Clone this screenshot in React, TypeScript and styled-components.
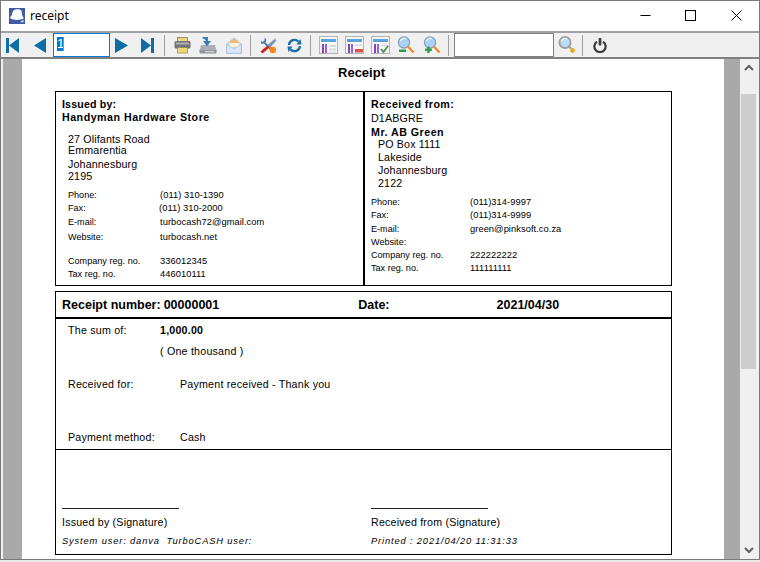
import React from 'react';
import styled, { createGlobalStyle } from 'styled-components';

const GlobalStyle = createGlobalStyle`
  html, body {
    margin: 0;
    padding: 0;
    background: #e8e8e8;
  }
  * {
    box-sizing: border-box;
  }
`;

const issuedContact = [
  { label: 'Phone:', value: '(011) 310-1390', mt: 8 },
  { label: 'Fax:', value: '(011) 310-2000', mt: 2, shift: -1 },
  { label: 'E-mail:', value: 'turbocash72@gmail.com', mt: 3 },
  { label: 'Website:', value: 'turbocash.net', mt: 4 },
  { label: 'Company reg. no.', value: '336012345', mt: 13 },
  { label: 'Tax reg. no.', value: '446010111', mt: 2 },
];

const receivedContact = [
  { label: 'Phone:', value: '(011)314-9997', mt: 8 },
  { label: 'Fax:', value: '(011)314-9999', mt: 2 },
  { label: 'E-mail:', value: 'green@pinksoft.co.za', mt: 3 },
  { label: 'Website:', value: '', mt: 2 },
  { label: 'Company reg. no.', value: '222222222', mt: 2 },
  { label: 'Tax reg. no.', value: '111111111', mt: 2 },
];

const Blue = '#0e6ca6';

const FirstIcon = () => (
  <svg width="14" height="15" viewBox="0 0 14 15">
    <rect x="0" y="0" width="3" height="15" fill={Blue} />
    <polygon points="13,0 13,15 3,7.5" fill={Blue} />
  </svg>
);
const PrevIcon = () => (
  <svg width="12" height="15" viewBox="0 0 12 15">
    <polygon points="12,0 12,15 0,7.5" fill={Blue} />
  </svg>
);
const NextIcon = () => (
  <svg width="13" height="15" viewBox="0 0 13 15">
    <polygon points="0,0 0,15 13,7.5" fill={Blue} />
  </svg>
);
const LastIcon = () => (
  <svg width="14" height="15" viewBox="0 0 14 15">
    <polygon points="0,0 0,15 10,7.5" fill={Blue} />
    <rect x="10" y="0" width="3" height="15" fill={Blue} />
  </svg>
);

const PrintIcon = () => (
  <svg width="17" height="17" viewBox="0 0 17 17">
    <rect x="3.5" y="0.5" width="10" height="4" fill="#e8d88a" stroke="#7d7440" strokeWidth="0.7" />
    <rect x="0.5" y="4" width="16" height="7.5" rx="1.5" fill="#6f7479" />
    <rect x="2" y="5.5" width="13" height="2" fill="#aeb3b7" />
    <circle cx="15" cy="5" r="0.8" fill="#d8352a" />
    <rect x="3.5" y="10.5" width="10" height="5.5" fill="#ecd978" stroke="#8d8340" strokeWidth="0.7" />
  </svg>
);
const ExportIcon = () => (
  <svg width="18" height="18" viewBox="0 0 18 18">
    <polygon points="2,9 16,9 17.5,15 0.5,15" fill="#a9afb5" />
    <rect x="0.5" y="14" width="17" height="3.5" fill="#8f959a" />
    <rect x="6" y="15.2" width="9" height="1" fill="#e4e6e8" />
    <path d="M3.5 1 H9 V5 H12 L8 10.5 L4 5 H7 C6.5 3.5 5 2.5 3.5 2.5 Z" fill="#3d7db4" />
  </svg>
);
const MailIcon = () => (
  <svg width="16" height="17" viewBox="0 0 16 17">
    <path d="M0.5 7 L8 1 L15.5 7 V16.5 H0.5 Z" fill="#c4dbf3" stroke="#9dbbdc" strokeWidth="0.7" />
    <rect x="3.5" y="4" width="9" height="6" fill="#fbf3d6" />
    <path d="M3.5 4.5 L8 1.8 L12.5 4.5 V6 H3.5 Z" fill="#edb77c" />
    <path d="M0.8 7.5 L8 12 L15.2 7.5 V16.2 H0.8 Z" fill="#d9e8f8" stroke="#9dbbdc" strokeWidth="0.6" />
  </svg>
);
const ToolsIcon = () => (
  <svg width="17" height="17" viewBox="0 0 17 17">
    <path d="M4.5 0.5 L6.5 3 L5.5 5.5 L14.5 13.5 L12.5 15.5 L4 6.5 L1.5 7 L0.5 3.5 L2.5 5 L4.5 3.5 Z" fill="#5278a6" />
    <path d="M16.5 0.5 L7 8.5 L9.5 11 L16.5 3.5 L15 3 Z" fill="#7095bb" />
    <path d="M7.5 8.5 L0.5 14.5 L2.5 16.5 L9.5 10.5 Z" fill="#d4201c" />
    <circle cx="12.8" cy="13" r="3.2" fill="#ef8a1e" />
  </svg>
);
const RefreshIcon = () => (
  <svg width="15" height="15" viewBox="0 0 15 15" fill="none">
    <path d="M2 7 A5.5 5.5 0 0 1 11.5 3.6" stroke="#1a6fa6" strokeWidth="2.3" />
    <polygon points="9.5,6.5 14.5,6.5 13.5,1" fill="#1a6fa6" />
    <path d="M13 8 A5.5 5.5 0 0 1 3.5 11.4" stroke="#1a6fa6" strokeWidth="2.3" />
    <polygon points="5.5,8.5 0.5,8.5 1.5,14" fill="#1a6fa6" />
  </svg>
);

const PageLayoutIcon = ({ mark }: { mark: 'none' | 'remove' | 'check' }) => (
  <svg width="19" height="18" viewBox="0 0 19 18">
    <rect x="0.5" y="0.5" width="18" height="17" fill="#f7f7f7" stroke="#b4b4b4" />
    <rect x="2" y="3" width="15" height="3" fill="#58a3dc" />
    <rect x="3" y="8" width="2" height="9" fill="#8b3fc4" />
    <rect x="6" y="8" width="2" height="9" fill="#9a63d4" />
    {mark === 'none' && (
      <>
        <rect x="10" y="9" width="7" height="2" fill="#d8dade" />
        <rect x="10" y="12.5" width="7" height="2" fill="#d8dade" />
        <rect x="10" y="15.5" width="7" height="1.5" fill="#e2e4e7" />
      </>
    )}
    {mark === 'remove' && (
      <>
        <rect x="10" y="8.5" width="7" height="1.5" fill="#d8dade" />
        <rect x="10" y="13" width="8" height="3.5" fill="#d9534f" />
      </>
    )}
    {mark === 'check' && (
      <>
        <rect x="10" y="8.5" width="7" height="1.5" fill="#d8dade" />
        <path d="M10 13 L12.5 16 L17 10" stroke="#3f9b45" strokeWidth="1.8" fill="none" />
      </>
    )}
  </svg>
);

const ZoomIcon = ({ kind }: { kind: 'minus' | 'plus' | 'find' }) => (
  <svg width="18" height="18" viewBox="0 0 18 18">
    <circle
      cx="7"
      cy="6.5"
      r="5.6"
      fill={kind === 'find' ? '#bcdcf4' : '#a9d2f6'}
      stroke={kind === 'find' ? '#9a9da1' : '#8aa0b4'}
      strokeWidth={kind === 'find' ? 1.8 : 1.2}
    />
    <path d="M3.5 5 A4 4 0 0 1 9 2.8" stroke="#fff" strokeWidth="1.2" fill="none" />
    {kind !== 'find' && <path d="M11 10.5 L16.5 16.5" stroke="#ee8f2a" strokeWidth="2.4" />}
    {kind === 'find' && <path d="M11 10.5 L13 12.5" stroke="#9a9da1" strokeWidth="2" />}
    {kind === 'find' && <circle cx="14.5" cy="14.5" r="2.4" fill="#f0a824" />}
    {kind === 'minus' && <rect x="2" y="13.5" width="7" height="2.5" fill="#2f9a48" />}
    {kind === 'plus' && (
      <path d="M5.5 10.5 V17 M2.2 13.8 H8.8" stroke="#2f9a48" strokeWidth="2.4" />
    )}
  </svg>
);

const PowerIcon = () => (
  <svg width="14" height="15" viewBox="0 0 14 15" fill="none">
    <path d="M4 3.8 A5.6 5.6 0 1 0 10 3.8" stroke="#3c3c3c" strokeWidth="2.2" />
    <rect x="5.6" y="0" width="2.8" height="7.5" rx="0.8" fill="#3c3c3c" />
  </svg>
);

const HatLogo = () => (
  <svg width="16" height="16" viewBox="0 0 16 16">
    <rect width="16" height="16" fill="#3f5ba6" />
    <path
      d="M4 3 C5.5 0.8 11 0.8 12.5 2.8 L13.5 8.5 C14.5 9 15 10 14 10.8 C11 12.4 4.5 12.2 2 10.8 C0.6 10 1 8.4 2.4 8 Z"
      fill="#fff"
    />
    <path d="M11 14 L14.5 11.5 V14.5 Z" fill="#c8d3ea" />
  </svg>
);

const App: React.FC = () => {
  return (
    <>
      <GlobalStyle />
      <Window>
        <TitleBar>
          <HatLogo />
          <TitleText>receipt</TitleText>
          <WindowControls>
            <ControlButton>
              <svg width="11" height="11" viewBox="0 0 11 11">
                <rect x="0.5" y="5" width="10" height="1" fill="#000" />
              </svg>
            </ControlButton>
            <ControlButton $mr={1}>
              <svg width="11" height="11" viewBox="0 0 11 11">
                <rect x="0.5" y="0.5" width="10" height="10" fill="none" stroke="#000" />
              </svg>
            </ControlButton>
            <ControlButton>
              <svg width="11" height="11" viewBox="0 0 11 11">
                <path d="M0.5 0.5 L10.5 10.5 M10.5 0.5 L0.5 10.5" stroke="#000" />
              </svg>
            </ControlButton>
          </WindowControls>
        </TitleBar>

        <Toolbar>
          <ToolButton><FirstIcon /></ToolButton>
          <ToolButton $ml={1}><PrevIcon /></ToolButton>
          <PageField>
            <Selected>1</Selected>
            <Caret />
          </PageField>
          <ToolButton $ml={-2}><NextIcon /></ToolButton>
          <ToolButton $ml={1}><LastIcon /></ToolButton>
          <Separator />
          <ToolButton><PrintIcon /></ToolButton>
          <ToolButton><ExportIcon /></ToolButton>
          <ToolButton><MailIcon /></ToolButton>
          <Separator />
          <ToolButton><ToolsIcon /></ToolButton>
          <ToolButton><RefreshIcon /></ToolButton>
          <Separator />
          <ToolButton><PageLayoutIcon mark="none" /></ToolButton>
          <ToolButton><PageLayoutIcon mark="remove" /></ToolButton>
          <ToolButton><PageLayoutIcon mark="check" /></ToolButton>
          <ToolButton><ZoomIcon kind="minus" /></ToolButton>
          <ToolButton><ZoomIcon kind="plus" /></ToolButton>
          <Separator />
          <SearchField />
          <ToolButton><ZoomIcon kind="find" /></ToolButton>
          <Separator $before={2} />
          <ToolButton><PowerIcon /></ToolButton>
        </Toolbar>

        <Preview>
          <Gutter $w={19} />
          <Page>
            <ReportTitle>Receipt</ReportTitle>
            <PartyBox>
              <PartyCell>
                <Line $mt={0} $bold>Issued by:</Line>
                <Line $mt={2} $bold $ls={0.5}>Handyman Hardware Store</Line>
                <Line $mt={11} $indent={6}>27 Olifants Road</Line>
                <Line $mt={0} $indent={6}>Emmarentia</Line>
                <Line $mt={3} $indent={6}>Johannesburg</Line>
                <Line $mt={1} $indent={6}>2195</Line>
                {issuedContact.map((row) => (
                  <ContactRow key={row.label} $mt={row.mt} $indent={6} $col={92}>
                    <span>{row.label}</span>
                    <ContactValue $shift={row.shift || 0}>{row.value}</ContactValue>
                  </ContactRow>
                ))}
              </PartyCell>
              <PartyCell $divider>
                <Line $mt={0} $bold $ls={0.45}>Received from:</Line>
                <Line $mt={3}>D1ABGRE</Line>
                <Line $mt={3} $bold $ls={0.5}>Mr. AB Green</Line>
                <Line $mt={1} $indent={7}>PO Box 1111</Line>
                <Line $mt={2} $indent={7}>Lakeside</Line>
                <Line $mt={2} $indent={7}>Johannesburg</Line>
                <Line $mt={2} $indent={7}>2122</Line>
                {receivedContact.map((row) => (
                  <ContactRow key={row.label} $mt={row.mt} $indent={0} $col={99}>
                    <span>{row.label}</span>
                    <ContactValue $shift={0}>{row.value}</ContactValue>
                  </ContactRow>
                ))}
              </PartyCell>
            </PartyBox>

            <ReceiptBox>
              <ReceiptHeader>
                <ReceiptNumber>Receipt number:</ReceiptNumber>
                <ReceiptNumber $ml={3}>00000001</ReceiptNumber>
                <ReceiptNumber $ml={139}>Date:</ReceiptNumber>
                <ReceiptNumber $ml={107}>2021/04/30</ReceiptNumber>
              </ReceiptHeader>
              <ReceiptBody>
                <BodyRow $mt={0} $col={92}>
                  <span>The sum of:</span>
                  <strong>1,000.00</strong>
                </BodyRow>
                <BodyRow $mt={10} $col={92}>
                  <span />
                  <span>( One thousand )</span>
                </BodyRow>
                <BodyRow $mt={22} $col={112}>
                  <span>Received for:</span>
                  <span>Payment received - Thank you</span>
                </BodyRow>
                <BodyRow $mt={42} $col={112}>
                  <span>Payment method:</span>
                  <span>Cash</span>
                </BodyRow>
              </ReceiptBody>
              <SignatureGrid>
                <SignatureCell>
                  <SignatureRule />
                  <SignatureLabel>Issued by (Signature)</SignatureLabel>
                  <FootNote>System user: danva&nbsp;&nbsp;TurboCASH user:</FootNote>
                </SignatureCell>
                <SignatureCell>
                  <SignatureRule />
                  <SignatureLabel>Received from (Signature)</SignatureLabel>
                  <FootNote>Printed : 2021/04/20 11:31:33</FootNote>
                </SignatureCell>
              </SignatureGrid>
            </ReceiptBox>
          </Page>
          <Gutter $w={16} />
          <Scrollbar>
            <ScrollArrow>
              <svg width="10" height="7" viewBox="0 0 10 7" fill="none">
                <path d="M1 6 L5 2 L9 6" stroke="#606060" strokeWidth="2" />
              </svg>
            </ScrollArrow>
            <ScrollThumb />
            <ScrollSpacer />
            <ScrollArrow>
              <svg width="10" height="7" viewBox="0 0 10 7" fill="none">
                <path d="M1 1 L5 5 L9 1" stroke="#606060" strokeWidth="2" />
              </svg>
            </ScrollArrow>
          </Scrollbar>
        </Preview>
      </Window>
    </>
  );
};

export default App;

const Window = styled.div`
  width: 760px;
  height: 560px;
  background: #fff;
  border: 1px solid #7a7a7a;
  display: flex;
  flex-direction: column;
  overflow: hidden;
  font-family: 'Liberation Sans', Arial, sans-serif;
  color: #000;
`;

const TitleBar = styled.div`
  height: 30px;
  flex: none;
  display: flex;
  align-items: center;
  padding-left: 8px;
  background: #fff;
  border-bottom: 1px solid #fff;
`;

const TitleText = styled.span`
  margin-left: 5px;
  font-family: 'Noto Sans', sans-serif;
  font-size: 12px;
`;

const WindowControls = styled.div`
  margin-left: auto;
  display: flex;
  height: 100%;
`;

const ControlButton = styled.div<{ $mr?: number }>`
  width: 45px;
  margin-right: ${(p) => p.$mr || 0}px;
  display: flex;
  align-items: center;
  justify-content: center;
`;

const Toolbar = styled.div`
  height: 28px;
  flex: none;
  display: flex;
  align-items: center;
  margin-left: -1px;
  background: #f0f0f0;
  border-top: 2px solid #a0a0a0;
  border-bottom: 2px solid #808080;
`;

const ToolButton = styled.div<{ $ml?: number }>`
  width: 26px;
  height: 24px;
  flex: none;
  display: flex;
  align-items: center;
  justify-content: center;
  margin-left: ${(p) => p.$ml || 0}px;
`;

const Separator = styled.div<{ $before?: number }>`
  width: 1px;
  height: 21px;
  flex: none;
  margin-left: ${(p) => p.$before ?? 3}px;
  margin-right: 4px;
  background: #a0a0a0;
`;

const PageField = styled.div`
  width: 57px;
  height: 24px;
  flex: none;
  display: flex;
  align-items: center;
  align-self: flex-start;
  padding: 0 0 3px 3px;
  background: #fff;
  border: 1px solid #0078d7;
  font-size: 13px;
`;

const Selected = styled.span`
  height: 14px;
  width: 6px;
  line-height: 14px;
  background: #0078d7;
  color: #fff;
`;

const Caret = styled.span`
  width: 1px;
  height: 14px;
  background: #e87a1c;
`;

const SearchField = styled.div`
  width: 100px;
  height: 24px;
  flex: none;
  align-self: flex-start;
  margin-left: 1px;
  background: #fff;
  border: 1px solid #808080;
`;

const Preview = styled.div`
  flex: 1;
  min-height: 0;
  display: flex;
  padding-left: 2px;
  background: #f0f0f0;
`;

const Gutter = styled.div<{ $w: number }>`
  width: ${(p) => p.$w}px;
  flex: none;
  background: #a9a9a9;
`;

const Page = styled.div`
  width: 702px;
  flex: none;
  overflow: hidden;
  background: #fff;
  padding-left: 33px;
`;

const ReportTitle = styled.div`
  height: 32px;
  width: 617px;
  padding: 5px 4px 0 0;
  text-align: center;
  font-size: 13px;
  line-height: 17px;
  font-weight: bold;
`;

const PartyBox = styled.div`
  width: 617px;
  height: 195px;
  display: grid;
  grid-template-columns: 307px 1fr;
  border: 1px solid #000;
`;

const PartyCell = styled.div<{ $divider?: boolean }>`
  padding: 7px 0 0 6px;
  border-left: ${(p) => (p.$divider ? '2px solid #000' : '0')};
`;

const Line = styled.div<{ $mt: number; $indent?: number; $bold?: boolean; $ls?: number }>`
  height: 11px;
  line-height: 11px;
  margin-top: ${(p) => p.$mt}px;
  margin-left: ${(p) => p.$indent || 0}px;
  font-size: 10.67px;
  font-weight: ${(p) => (p.$bold ? 'bold' : 'normal')};
  letter-spacing: ${(p) => p.$ls ?? 0.15}px;
  white-space: nowrap;
`;

const ContactRow = styled.div<{ $mt: number; $indent: number; $col: number }>`
  height: 11px;
  line-height: 11px;
  margin-top: ${(p) => p.$mt}px;
  margin-left: ${(p) => p.$indent}px;
  display: grid;
  grid-template-columns: ${(p) => p.$col}px 1fr;
  font-size: 9.1px;
  white-space: nowrap;
`;

const ContactValue = styled.span<{ $shift: number }>`
  margin-left: ${(p) => p.$shift}px;
  font-size: 9.33px;
  letter-spacing: 0.05px;
`;

const ReceiptBox = styled.div`
  width: 617px;
  margin-top: 5px;
  border: 1px solid #000;
  height: 264px;
  display: flex;
  flex-direction: column;
`;

const ReceiptHeader = styled.div`
  height: 27px;
  flex: none;
  display: flex;
  align-items: center;
  padding: 1px 0 0 6px;
  border-bottom: 2px solid #000;
`;

const ReceiptNumber = styled.span<{ $ml?: number }>`
  margin-left: ${(p) => p.$ml || 0}px;
  font-size: 12.5px;
  font-weight: bold;
  white-space: nowrap;
`;

const ReceiptBody = styled.div`
  height: 131px;
  flex: none;
  padding: 6px 0 0 12px;
  border-bottom: 1px solid #000;
`;

const BodyRow = styled.div<{ $mt: number; $col: number }>`
  height: 11px;
  line-height: 11px;
  margin-top: ${(p) => p.$mt}px;
  display: grid;
  grid-template-columns: ${(p) => p.$col}px 1fr;
  font-size: 10.67px;
  letter-spacing: 0.22px;
  white-space: nowrap;
`;

const SignatureGrid = styled.div`
  flex: 1;
  display: grid;
  grid-template-columns: 309px 1fr;
`;

const SignatureCell = styled.div`
  padding: 58px 0 0 6px;
`;

const SignatureRule = styled.div`
  width: 117px;
  height: 1px;
  background: #222;
`;

const SignatureLabel = styled.div`
  margin-top: 8px;
  height: 11px;
  line-height: 11px;
  font-size: 10.67px;
  letter-spacing: 0.2px;
  white-space: nowrap;
`;

const FootNote = styled.div`
  margin-top: 8px;
  height: 11px;
  line-height: 11px;
  font-size: 9.33px;
  font-style: italic;
  letter-spacing: 0.85px;
  white-space: nowrap;
`;

const Scrollbar = styled.div`
  width: 17px;
  flex: none;
  display: flex;
  flex-direction: column;
  background: #f0f0f0;
`;

const ScrollArrow = styled.div`
  height: 17px;
  flex: none;
  display: flex;
  align-items: center;
  justify-content: center;
`;

const ScrollThumb = styled.div`
  height: 275px;
  margin: 18px 1px 0 1px;
  flex: none;
  background: #cdcdcd;
`;

const ScrollSpacer = styled.div`
  flex: 1;
`;
